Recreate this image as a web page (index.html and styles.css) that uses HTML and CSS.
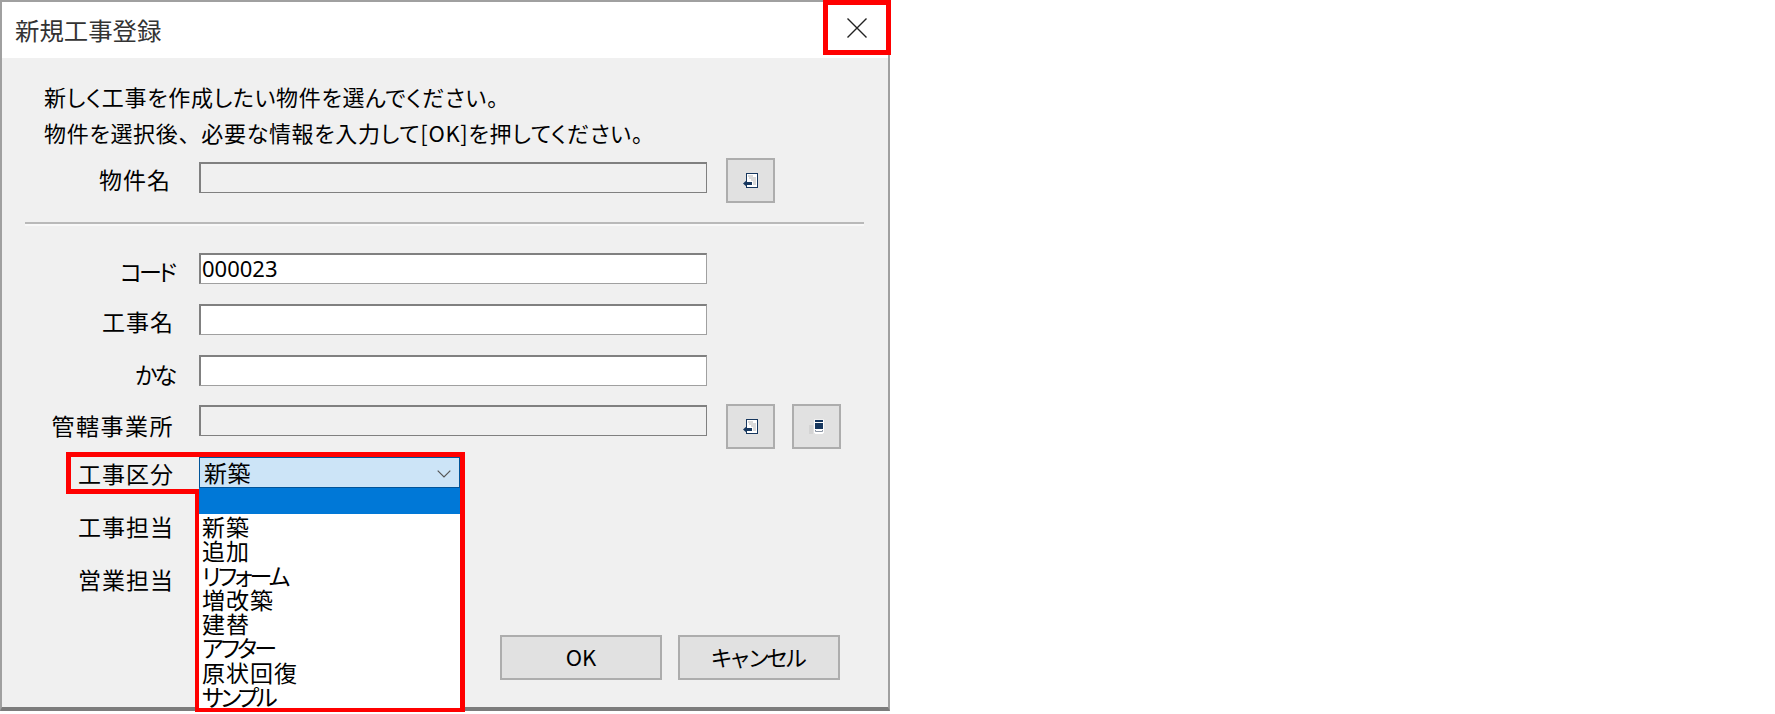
FILE: index.html
```html
<!DOCTYPE html>
<html lang="ja">
<head>
<meta charset="utf-8">
<title>新規工事登録</title>
<link rel="stylesheet" href="styles.css">
</head>
<body>
<div class="window">
  <header class="titlebar">
    <span class="title">新規工事登録</span>
    <button class="close" type="button" aria-label="閉じる">
      <svg width="20" height="20" viewBox="0 0 20 20"><path d="M0.5 0.5L19.5 19.5M19.5 0.5L0.5 19.5" fill="none" stroke="#222" stroke-width="1.4"/></svg>
    </button>
  </header>
  <main class="content">
    <p class="intro">新しく工事を作成したい物件を選んでください。<br>物件を選択後<span class="fullwidth">、</span>必要な情報を入力して[OK]を押してください。</p>

    <div class="row row-tool row-property">
      <label class="label">物件名</label>
      <div class="field readonly"></div>
      <button class="tool" type="button">
        <svg width="16" height="16" viewBox="0 0 16 16"><rect x="3.5" y="0.5" width="11" height="14" fill="#fff" stroke="#17375e"/><path d="M5 3h5M6 5h7M8 7h5M10 9h3M10 11h3" stroke="#b5b5b5"/><path d="M0 10.5L4 7v2h5v3H4v2z" fill="#17375e"/></svg>
      </button>
    </div>

    <hr class="rule">

    <div class="row row-field row-code">
      <label class="label label-kana">コード</label>
      <div class="field">000023</div>
    </div>
    <div class="row row-field row-name">
      <label class="label">工事名</label>
      <div class="field"></div>
    </div>
    <div class="row row-field row-kana">
      <label class="label label-kana">かな</label>
      <div class="field"></div>
    </div>
    <div class="row row-tool row-office">
      <label class="label">管轄事業所</label>
      <div class="field readonly"></div>
      <button class="tool" type="button">
        <svg width="16" height="16" viewBox="0 0 16 16"><rect x="3.5" y="0.5" width="11" height="14" fill="#fff" stroke="#17375e"/><path d="M5 3h5M6 5h7M8 7h5M10 9h3M10 11h3" stroke="#b5b5b5"/><path d="M0 10.5L4 7v2h5v3H4v2z" fill="#17375e"/></svg>
      </button>
      <button class="tool tool-second" type="button">
        <svg width="16" height="16" viewBox="0 0 16 16"><rect x="0" y="6" width="4" height="9" fill="#d4d4d4"/><path d="M5 0.500h10v13l-1.500 1.500h-7L5 13.500z" fill="#fff"/><rect x="6" y="1" width="8" height="2" fill="#17375e"/><rect x="6" y="4" width="8" height="6" fill="#17375e"/><path d="M6.500 11v1.500h7V11" fill="none" stroke="#8a94a3"/></svg>
      </button>
    </div>

    <div class="row row-select">
      <label class="label">工事区分</label>
      <div class="select">
        <span>新築</span>
        <svg class="chevron" width="14" height="8" viewBox="0 0 14 8"><path d="M0.700 0.700L7 7L13.300 0.700" fill="none" stroke="#555" stroke-width="1.200"/></svg>
        <ul class="dropdown">
          <li class="selected">&nbsp;</li>
          <li>新築</li>
          <li>追加</li>
          <li class="kana">リフォーム</li>
          <li>増改築</li>
          <li>建替</li>
          <li class="kana">アフター</li>
          <li>原状回復</li>
          <li class="kana">サンプル</li>
        </ul>
      </div>
    </div>
    <div class="row row-plain row-staff"><label class="label">工事担当</label></div>
    <div class="row row-plain"><label class="label">営業担当</label></div>

    <footer class="actions">
      <button class="action" type="button">OK</button>
      <button class="action action-kana" type="button">キャンセル</button>
    </footer>
  </main>
</div>

<div class="mark-close"></div>
<svg class="mark-select" width="400" height="262" viewBox="0 0 400 262">
  <path d="M2.500 2.500H396.500V257.500H131.500V39.500H2.500Z" fill="none" stroke="#ff0000" stroke-width="5"/>
</svg>
</body>
</html>
```
FILE: styles.css
```css
* { box-sizing: border-box; }

html, body {
  margin: 0;
  padding: 0;
  background: #fff;
}

body {
  position: relative;
  width: 1775px;
  height: 714px;
  overflow: hidden;
  font-family: "Noto Sans CJK JP", "Noto Sans", sans-serif;
  font-feature-settings: "palt";
  font-size: 22px;
  color: #000;
}

.window {
  width: 890px;
  height: 711px;
  background: #f0f0f0;
  border: 2px solid #a0a0a0;
  border-bottom: 4px solid #7c7c7c;
  display: flex;
  flex-direction: column;
}

.titlebar {
  height: 56px;
  flex: none;
  background: #fff;
  display: flex;
  align-items: center;
  justify-content: space-between;
  padding-left: 13px;
}

.title {
  font-size: 24.400px;
  color: #333;
  font-feature-settings: normal;
  line-height: 54px;
}

.close {
  width: 66px;
  height: 52px;
  padding: 0 0 0 4px;
  margin-top: -4px;
  border: 0;
  background: none;
  display: flex;
  align-items: center;
  justify-content: center;
}

.content {
  flex: 1;
  padding-top: 20px;
  display: flex;
  flex-direction: column;
}

.intro {
  margin: 0 0 8px 42px;
  line-height: 36px;
  letter-spacing: 0.7px;
}

.fullwidth {
  font-feature-settings: normal;
}

.row {
  display: flex;
  align-items: flex-start;
}

.label {
  width: 172px;
  margin-right: 25px;
  text-align: right;
  flex: none;
  letter-spacing: 1px;
  font-size: 23px;
}

.label-kana {
  letter-spacing: -3px;
}

.field {
  width: 508px;
  height: 31px;
  background: #fff;
  border: 1px solid #a0a0a0;
  border-top: 2px solid #808080;
  border-left: 2px solid #808080;
  padding-left: 1px;
  font-size: 22px;
  line-height: 27px;
  font-family: "Noto Sans", "Noto Sans CJK JP", sans-serif;
  font-feature-settings: normal;
}

.field.readonly {
  background: #f0f0f0;
  margin-top: 4px;
  border-right-color: #808080;
  border-bottom-color: #808080;
}

.tool {
  width: 49px;
  height: 45px;
  margin-left: 19px;
  padding: 0;
  flex: none;
  background: #e1e1e1;
  border: 2px solid #adadad;
  display: flex;
  align-items: center;
  justify-content: center;
}

.tool-second {
  margin-left: 17px;
}

.row-tool { height: 45px; }

.row-property .label {
  width: 169px;
  margin-right: 28px;
  line-height: 43px;
}

.row-office { margin-bottom: 8px; }
.row-office .field.readonly { margin-top: 1px; }

.row-office .label {
  line-height: 42px;
  letter-spacing: 1.500px;
}

.rule {
  width: 839px;
  height: 4px;
  margin: 19px 0 27px 23px;
  border: 0;
  border-top: 2px solid #b9b9b9;
  border-bottom: 2px solid #f8f8f8;
}

.row-field {
  height: 31px;
  margin-bottom: 20px;
}

.row-code .label { line-height: 36px; }
.row-name .label { line-height: 35px; }
.row-kana .label { line-height: 38px; }
.row-kana { margin-bottom: 18px; }

.row-select {
  height: 31px;
  position: relative;
}

.row-select .label { line-height: 33px; }

.select {
  position: relative;
  width: 261px;
  height: 31px;
  background: #cce4f7;
  border: 1px solid #005499;
  padding-left: 4px;
  line-height: 27px;
  font-size: 23px;
  letter-spacing: 0.5px;
  display: flex;
  align-items: center;
  justify-content: space-between;
}

.chevron {
  margin-right: 8px;
  margin-top: 3px;
  flex: none;
}

.dropdown {
  position: absolute;
  z-index: 2;
  top: 30px;
  left: -1px;
  width: 261px;
  height: 220px;
  margin: 0;
  padding: 0;
  list-style: none;
  background: #fff;
  font-size: 23px;
  letter-spacing: 1px;
}

.dropdown li {
  height: 24.300px;
  line-height: 24.300px;
  padding-left: 3px;
  white-space: nowrap;
}

.dropdown .kana {
  letter-spacing: -2.800px;
}

.dropdown .selected {
  height: 26px;
  background: #0078d7;
  color: #fff;
}

.row-plain {
  height: 53px;
}

.row-staff {
  margin-top: 16px;
}

.row-plain .label { line-height: 44px; }

.actions {
  display: flex;
  gap: 16px;
  margin: 25px 0 0 498px;
}

.action {
  width: 162px;
  height: 45px;
  padding: 0 0 4px;
  background: #e1e1e1;
  border: 2px solid #adadad;
  font-family: inherit;
  font-size: 22px;
  color: #000;
  line-height: 38px;
}

.action-kana {
  padding-right: 4px;
  letter-spacing: -3.400px;
}

.mark-close {
  position: absolute;
  left: 823px;
  top: 0;
  width: 68px;
  height: 55px;
  border: 5px solid #ff0000;
}

.mark-select {
  position: absolute;
  left: 66px;
  top: 452px;
}
```
